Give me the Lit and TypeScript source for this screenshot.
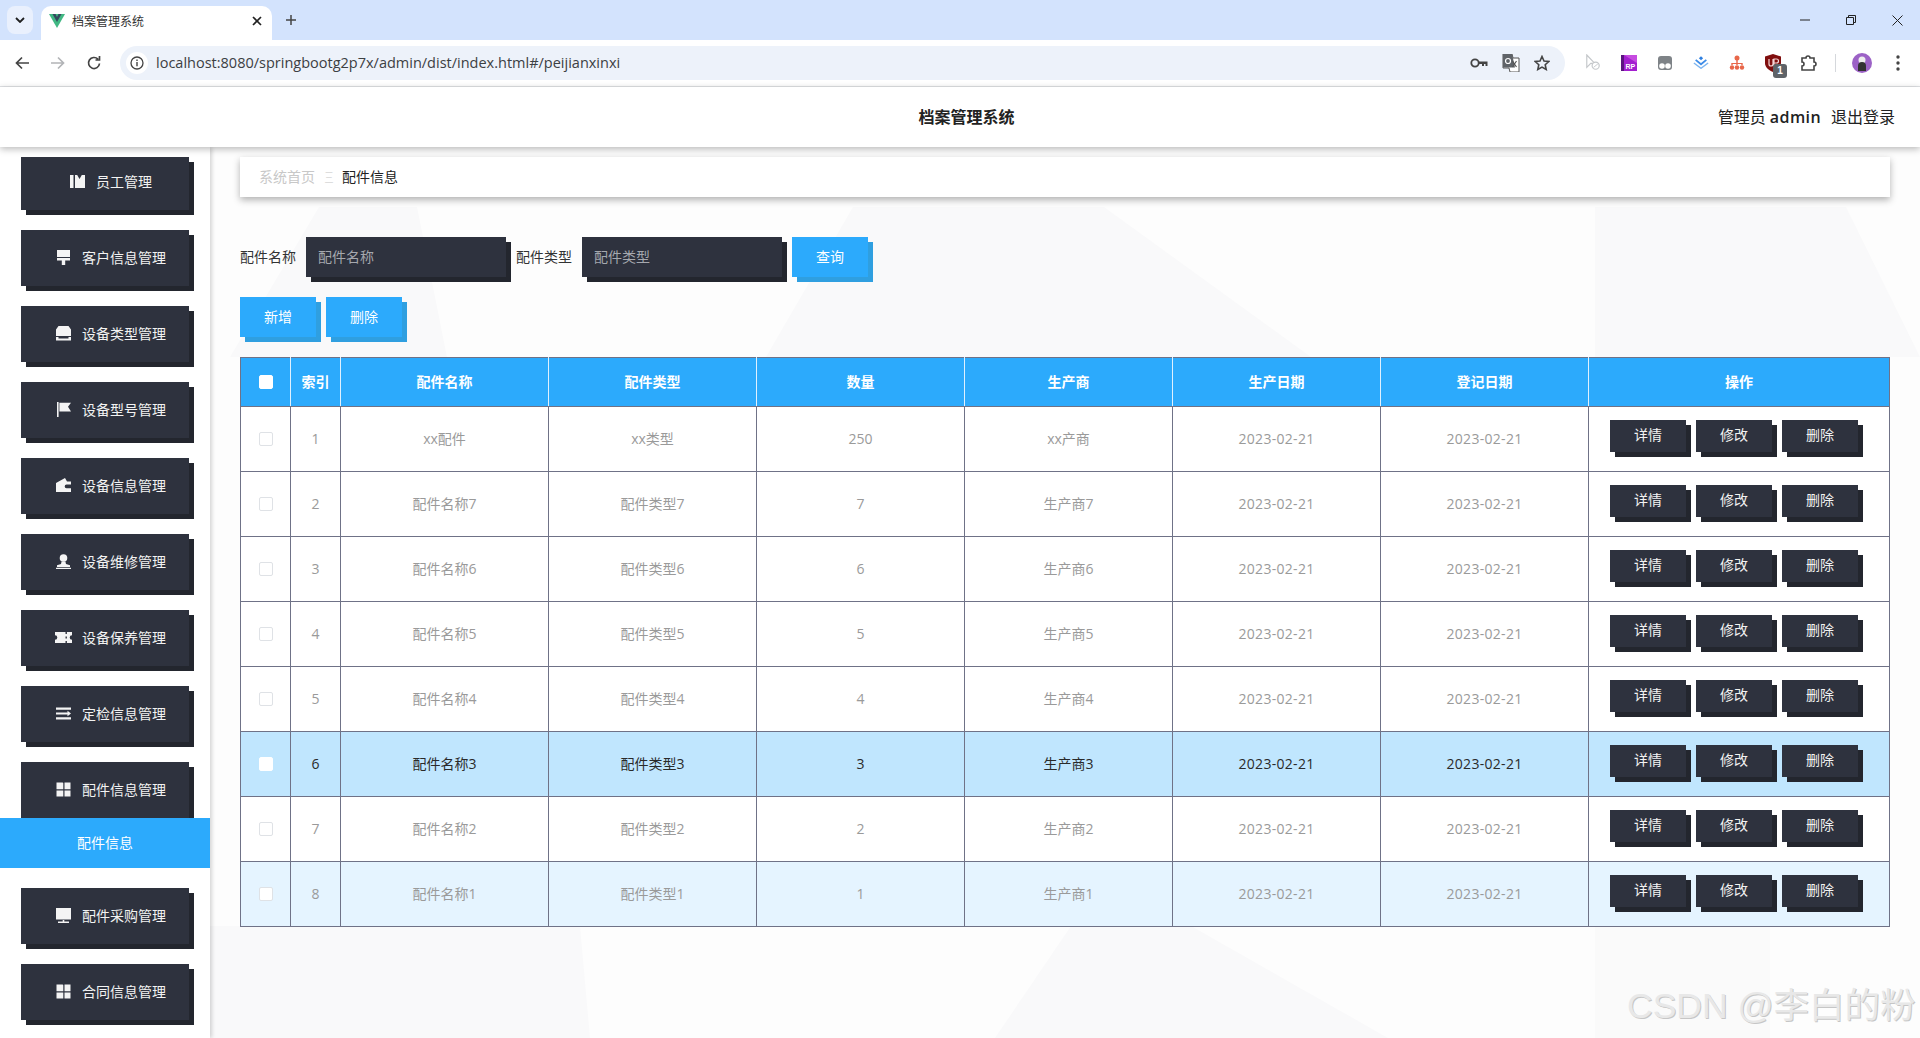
import { LitElement, html, css, svg } from "lit";
import { customElement } from "lit/decorators.js";

const ICONS: Record<string, any> = {
  map: svg`<path d="M0 1h3.500v13H0zM5 1h2.200l2.300 4 2.300-4H15v13H5z"/>`,
  brush: svg`<path d="M1 0h13v7H1zM1 8h13v2.400H9.200V15H5.800v-4.600H1z"/>`,
  box: svg`<path d="M2.500 0h10L15 3.500V10H0V3.500zM0 11h2.500v1.500h10V11H15v3.600H0z"/>`,
  flag: svg`<path d="M1 0h1.600v15H1zM3.400 .8H15l-3 4 3 4.600H3.400z"/>`,
  wallet: svg`<path d="M0 5l9-5 2 3.600h4v3H10.500a1.800 1.800 0 0 0 0 3.600H15V14H0z"/>`,
  user: svg`<circle cx="7.500" cy="4" r="3.800"/><path d="M5.600 7.600h3.800l.6 2.400 4 1.200V13H1v-1.800l4-1.200zM0 13.800h15V15H0z"/>`,
  ticket: svg`<path d="M-1 2h17v3.200a2.300 2.300 0 0 0 0 4.600V13H-1V9.800a2.300 2.300 0 0 0 0-4.600zM9.500 2v2h1.400V2zM9.500 6.500v2h1.400v-2zM9.500 11v2h1.400v-2z"/>`,
  list: svg`<path d="M0 1.500h15v2.200H0zM0 6.400h11.500V4.800L15 7.500l-3.500 2.700V8.600H0zM0 11.300h15v2.200H0z"/>`,
  grid: svg`<path d="M.5 .5h6a.8.8 0 0 1 .8 .8v5.900H.5zM8.500 .5h6v6.700H8.500zM.5 8.500h6.800v6H.5zM8.500 8.500h6v6h-6z"/>`,
  screen: svg`<path d="M0 0h15v11.500H0zM6.700 12h1.600v1.500H13V15H2v-1.500h4.700z"/>`,
};

const MENU = [
  ["员工管理", "map"], ["客户信息管理", "brush"], ["设备类型管理", "box"], ["设备型号管理", "flag"],
  ["设备信息管理", "wallet"], ["设备维修管理", "user"], ["设备保养管理", "ticket"], ["定检信息管理", "list"],
  ["配件信息管理", "grid"], ["配件采购管理", "screen"], ["合同信息管理", "grid"],
];

const ROWS = [
  ["1", "xx配件", "xx类型", "250", "xx产商"],
  ["2", "配件名称7", "配件类型7", "7", "生产商7"],
  ["3", "配件名称6", "配件类型6", "6", "生产商6"],
  ["4", "配件名称5", "配件类型5", "5", "生产商5"],
  ["5", "配件名称4", "配件类型4", "4", "生产商4"],
  ["6", "配件名称3", "配件类型3", "3", "生产商3"],
  ["7", "配件名称2", "配件类型2", "2", "生产商2"],
  ["8", "配件名称1", "配件类型1", "1", "生产商1"],
];

@customElement("app-root")
export class AppRoot extends LitElement {
  static styles = css`
    :host { display: flex; flex-direction: column; width: 1920px; height: 1038px; overflow: hidden; position: relative;
      font-family: "Open Sans", "Noto Sans CJK SC", sans-serif; font-size: 14px; background: #fff; color: #333; }
    * { box-sizing: border-box; }
    svg { display: block; flex: none; }
    .tabs { height: 40px; background: #d3e3fd; display: flex; align-items: flex-end; flex: none; position: relative; }
    .tabdown { width: 26px; height: 28px; margin: 0 0 6px 7px; border-radius: 8px; background: #e9f0fd; display: flex; align-items: center; justify-content: center; align-self: flex-end; }
    .tab { width: 231px; height: 34px; margin-left: 8px; background: #fff; border-radius: 10px 10px 0 0; display: flex; align-items: center; padding: 0 10px 4px 8px; font-size: 12px; color: #333; }
    .tab span { margin-left: 7px; flex: 1; padding-bottom: 1px; }
    .plus { margin: 0 0 7px 13px; width: 16px; height: 27px; display: flex; align-items: center; }
    .winbtns { margin-left: auto; display: flex; gap: 36px; align-self: center; margin-right: 17px; align-items: center; }
    .toolbar { height: 47px; flex: none; background: #fff; border-bottom: 1px solid #e1e3e6; display: flex; align-items: center; padding-bottom: 1px; }
    .nav { display: flex; gap: 20px; margin-left: 14px; }
    .addr { width: 1445px; height: 34px; margin-left: 18px; border-radius: 17px; background: #edf2fa; display: flex; align-items: center; padding: 0 15px 0 6px; }
    .info { width: 22px; height: 22px; border-radius: 50%; background: #fff; display: flex; align-items: center; justify-content: center; flex: none; }
    .url { margin-left: 8px; font-size: 14.500px; color: #3c4043; flex: 1; }
    .addricons { display: flex; gap: 14px; align-items: center; }
    .exts { display: flex; align-items: center; gap: 20px; margin-left: 20px; }
    .sep { width: 1px; height: 18px; background: #d5d8dc; margin: 0 -4px 0 -2px; }
    .ext-badge { position: relative; }
    .badge { position: absolute; right: -6px; bottom: -6px; width: 14px; height: 14px; border-radius: 3px; background: #5f6368; color: #fff; font: bold 10px/14px "Liberation Sans", sans-serif; text-align: center; }
    .appbar { height: 60px; flex: none; background: #fff; position: relative; z-index: 3; box-shadow: 0 2px 7px rgba(0,0,0,.28); display: grid; grid-template-columns: 1fr auto 1fr; align-items: center; padding: 0 25px 0 0; font-size: 16px; color: #222; }
    .apptitle { grid-column: 2; font-weight: 600; margin-left: 38px; padding-bottom: 2px; }
    .user { grid-column: 3; justify-self: end; display: flex; gap: 10px; padding-bottom: 2px; }
    .user b { font-weight: 600; letter-spacing: .4px; }
    .body { flex: 1; display: flex; min-height: 0; }
    .side { width: 210px; flex: none; background: #fff; box-shadow: 2px 0 4px rgba(0,0,0,.16); position: relative; z-index: 2; padding-top: 10px; overflow: hidden; display: flex; flex-direction: column; }
    .mi { width: 168px; height: 56px; margin: 0 0 20px 21px; flex: none; background: #2e323e; box-shadow: 5px 5px 0 #23262e; color: #f2f2f2; display: flex; align-items: center; justify-content: center; padding: 0 0 2px 12px; gap: 11px; }
    .mi.first { height: 53px; padding-bottom: 5px; }
    .mi.open { margin-bottom: 0; }
    .mi svg { fill: #f4f4f4; overflow: visible; }
    .sub { height: 50px; flex: none; background: #2caafc; color: #fff; display: flex; align-items: center; justify-content: center; margin-bottom: 20px; position: relative; padding-bottom: 2px; }
    .main { flex: 1; min-width: 0; position: relative; background: #fdfdfd; padding: 10px 30px 0; }
    .bg { position: absolute; left: 0; top: 0; }
    .content { position: relative; }
    .crumb { height: 40px; background: #fff; box-shadow: 0 3px 7px rgba(0,0,0,.3); display: flex; align-items: center; padding: 0 0 2px 19px; gap: 9px; color: #c8c8c8; }
    .crumb .cur { color: #222; }
    .crumb .div { width: 9px; display: flex; justify-content: center; color: #ddd; }
    .crumb .div span { transform: scaleX(.64); }
    .search { display: flex; align-items: center; margin-top: 40px; height: 40px; }
    .search label { color: #333; margin-right: 10px; padding-bottom: 2px; }
    .inp { width: 200px; height: 40px; background: #2e323e; box-shadow: 5px 5px 0 #23262e; color: #a5a8ae; padding: 0 0 2px 12px; display: flex; align-items: center; margin-right: 10px; }
    .btn { width: 76px; height: 40px; background: #2caafc; box-shadow: 5px 5px 0 #2f9fe0; color: #fff; display: flex; align-items: center; justify-content: center; padding-bottom: 2px; }
    .actions { display: flex; gap: 10px; margin-top: 20px; }
    table { border-collapse: collapse; table-layout: fixed; width: 1649px; margin-top: 20px; }
    th, td { border: 1px solid #6f7287; text-align: center; padding: 0 0 2px; font-weight: 400; }
    th:first-child, td:first-child { padding: 0; }
    th { height: 49px; background: #2caafc; color: #fff; font-weight: 700; border-left-color: #dff1ff; border-right-color: #dff1ff; }
    th:first-child { border-left-color: #6f7287; }
    th:last-child { border-right-color: #6f7287; }
    td { height: 65px; background: #fff; color: #9a9a9a; }
    tr.sel td { background: #c0e6fe; color: #2a2a2a; }
    tr.alt td { background: #e5f4ff; }
    .date { letter-spacing: .3px; }
    .cb { display: block; width: 14px; height: 14px; margin: 0 auto; border: 1px solid #dfe2e6; border-radius: 2px; background: #fff; }
    th .cb, tr.sel .cb { border-color: #fff; }
    td.ops { vertical-align: top; padding: 13px 0 0 21px; }
    .opsrow { display: flex; gap: 10px; }
    .op { width: 76px; height: 32px; background: #2e323e; box-shadow: 5px 5px 0 #23262e; color: #f2f2f2; display: flex; align-items: center; justify-content: center; padding-bottom: 5px; }
    .wm { position: absolute; left: 1627px; top: 977px; z-index: 5; font: 35.500px "Liberation Sans", "Noto Sans CJK SC", sans-serif; color: #e8e8e8; text-shadow: 1px 1px 0 #c6c6c6; white-space: nowrap; }
  `;

  private ico(n: string) {
    return html`<svg width="15" height="15" viewBox="0 0 15 15">${ICONS[n]}</svg>`;
  }

  private chrome() {
    return html`
      <div class="tabs">
        <div class="tabdown"><svg width="10" height="6" viewBox="0 0 10 6"><path d="M1 1l4 4 4-4" fill="none" stroke="#1f1f1f" stroke-width="1.800"/></svg></div>
        <div class="tab">
          <svg width="16" height="16" viewBox="0 0 16 16"><path d="M0 1h16L8 15z" fill="#41b883"/><path d="M3.500 1h3L8 4l1.500-3h3L8 9z" fill="#35495e"/></svg>
          <span>档案管理系统</span>
          <svg width="10" height="10" viewBox="0 0 10 10"><path d="M1 1l8 8M9 1l-8 8" stroke="#222" stroke-width="1.700"/></svg>
        </div>
        <div class="plus"><svg width="12" height="12" viewBox="0 0 12 12"><path d="M6 1v10M1 6h10" stroke="#444" stroke-width="1.500"/></svg></div>
        <div class="winbtns">
          <svg width="10" height="2" viewBox="0 0 10 2"><path d="M0 1h10" stroke="#222"/></svg>
          <svg width="10" height="10" viewBox="0 0 10 10"><path d="M.5 2.500h7v7h-7zM2.500 2.500v-2h7v7h-2" fill="none" stroke="#222"/></svg>
          <svg width="11" height="11" viewBox="0 0 11 11"><path d="M.5 .5l10 10M10.500 .5l-10 10" stroke="#222"/></svg>
        </div>
      </div>
      <div class="toolbar">
        <div class="nav">
          <svg width="16" height="16" viewBox="0 0 16 16"><path d="M15 8H2.500M8 2.500L2.500 8 8 13.500" fill="none" stroke="#444" stroke-width="1.700"/></svg>
          <svg width="16" height="16" viewBox="0 0 16 16"><path d="M1 8h12.500M8 2.500L13.500 8 8 13.500" fill="none" stroke="#b2b4b7" stroke-width="1.700"/></svg>
          <svg width="16" height="16" viewBox="0 0 16 16"><path d="M13.500 8.500A5.500 5.500 0 1 1 12 4.200M13.500 1v4h-4" fill="none" stroke="#444" stroke-width="1.700"/></svg>
        </div>
        <div class="addr">
          <div class="info"><svg width="14" height="14" viewBox="0 0 14 14"><circle cx="7" cy="7" r="6" fill="none" stroke="#444" stroke-width="1.300"/><path d="M7 6v4.200M7 3.500v1.400" stroke="#444" stroke-width="1.400"/></svg></div>
          <div class="url">localhost:8080/springbootg2p7x/admin/dist/index.html#/peijianxinxi</div>
          <div class="addricons">
            <svg width="18" height="12" viewBox="0 0 18 12"><circle cx="5" cy="6" r="3.700" fill="none" stroke="#444" stroke-width="1.800"/><path d="M8.500 4.500H17.500V9h-2V7h-1.500v2h-2V7H8.500z" fill="#444"/></svg>
            <svg width="18" height="18" viewBox="0 0 18 18"><path d="M1 0h9l1 4h6v14H8l-1-4H1z" fill="#fff" stroke="#555"/><path d="M1 0h9l3 13.500H1z" fill="#5f6368"/><path d="M10.500 7l4 6M14.500 7l-4 6" stroke="#555" stroke-width="1.200"/><circle cx="6" cy="7" r="2.500" fill="none" stroke="#fff" stroke-width="1.200"/></svg>
            <svg width="16" height="16" viewBox="0 0 16 16"><path d="M8 1.500l2 4.500 4.800.5-3.600 3.200 1 4.800L8 12.100l-4.200 2.400 1-4.800L1.200 6.500 6 6z" fill="none" stroke="#444" stroke-width="1.600"/></svg>
          </div>
        </div>
        <div class="exts">
          <svg width="16" height="18" viewBox="0 0 18 20"><path d="M2 1l9 9.500H6.500L2 15z" fill="#fff" stroke="#c4c7ca" stroke-width="1.300"/><circle cx="12" cy="13" r="4" fill="#fff" stroke="#c4c7ca" stroke-width="1.300"/><path d="M9.500 15l5-4" stroke="#c4c7ca"/></svg>
          <svg width="16" height="16" viewBox="0 0 16 16"><rect width="16" height="16" fill="#a31fd0"/><rect width="3" height="16" fill="#5b1480"/><path d="M3 0h13v8z" fill="#c64be0"/><text x="4.500" y="14" font-size="7" font-weight="700" font-family="Liberation Sans" fill="#fff">RP</text></svg>
          <svg width="16" height="16" viewBox="0 0 16 16"><rect x="1" y="1" width="14" height="14" rx="3" fill="#7e8387"/><circle cx="5" cy="11" r="2.800" fill="#fff"/><circle cx="11" cy="11" r="2.800" fill="#fff"/></svg>
          <svg width="16" height="13" viewBox="0 0 18 14"><path d="M9 0l2.400 2.200L9 4.400 6.600 2.200z" fill="#2d7fe0"/><path d="M3 4l6 5 6-5" fill="none" stroke="#3d8ce8" stroke-width="2"/><path d="M1 7.500l8 6 8-6" fill="none" stroke="#7db5f0" stroke-width="1.600"/></svg>
          <svg width="16" height="16" viewBox="0 0 16 16" fill="#e8674a"><circle cx="8" cy="3" r="2.500"/><path d="M7.300 5h1.400v3h5v2h-1.400V9H8.700v1H7.300V9H3.700v1H2.300V8h5z"/><circle cx="3" cy="12.500" r="2.200"/><circle cx="8" cy="12.500" r="2.200"/><circle cx="13" cy="12.500" r="2.200"/></svg>
          <div class="ext-badge"><svg width="16" height="18" viewBox="0 0 16 18"><path d="M8 0l8 2.500V9c0 4-3 7-8 9-5-2-8-5-8-9V2.500z" fill="#800e0e"/><path d="M4 5v5a2 2 0 0 0 4 0V5M9 12V5h2.500a2 2 0 0 1 0 4H9" fill="none" stroke="#f3d6d6" stroke-width="1.200"/></svg><div class="badge">1</div></div>
          <svg width="16" height="18" viewBox="0 0 16 18"><path d="M1 4h4a2 2 0 1 1 4 0h4v4a2 2 0 1 1 0 4v4H1v-4a2 2 0 1 0 0-4z" fill="#fff" stroke="#444" stroke-width="1.600"/></svg>
          <div class="sep"></div>
          <svg width="20" height="20" viewBox="0 0 20 20"><circle cx="10" cy="10" r="10" fill="#9c62c6"/><circle cx="10" cy="7" r="3.500" fill="#eee"/><path d="M6 18v-5a4 4 0 0 1 8 0v5z" fill="#333"/></svg>
          <svg width="4" height="16" viewBox="0 0 4 16" style="margin-left:4px" fill="#444"><circle cx="2" cy="2" r="1.700"/><circle cx="2" cy="8" r="1.700"/><circle cx="2" cy="14" r="1.700"/></svg>
        </div>
      </div>`;
  }

  private side() {
    return html`<aside class="side">
      ${MENU.map(([t, i], n) => html`
        <div class="mi ${n === 0 ? "first" : ""} ${n === 8 ? "open" : ""}">${this.ico(i)}<span>${t}</span></div>
        ${n === 8 ? html`<div class="sub">配件信息</div>` : ""}
      `)}
    </aside>`;
  }

  private table() {
    const heads = ["配件名称", "配件类型", "数量", "生产商", "生产日期", "登记日期"];
    return html`<table>
      <colgroup><col style="width:50px"><col style="width:50px">${[0, 1, 2, 3, 4, 5].map(() => html`<col style="width:208px">`)}<col style="width:301px"></colgroup>
      <thead><tr><th><span class="cb"></span></th><th>索引</th>${heads.map((h) => html`<th>${h}</th>`)}<th>操作</th></tr></thead>
      <tbody>
        ${ROWS.map((r, i) => html`<tr class="${i === 5 ? "sel" : i === 7 ? "alt" : ""}">
          <td><span class="cb"></span></td>
          ${r.map((c) => html`<td>${c}</td>`)}
          <td class="date">2023-02-21</td><td class="date">2023-02-21</td>
          <td class="ops"><div class="opsrow"><div class="op">详情</div><div class="op">修改</div><div class="op">删除</div></div></td>
        </tr>`)}
      </tbody>
    </table>`;
  }

  render() {
    return html`
      ${this.chrome()}
      <header class="appbar">
        <div class="apptitle">档案管理系统</div>
        <div class="user"><span>管理员 <b>admin</b></span><span>退出登录</span></div>
      </header>
      <div class="body">
        ${this.side()}
        <main class="main">
          <svg class="bg" width="1710" height="891" viewBox="0 0 1710 891" fill="#f9f9fa">
            <path d="M109 60h98l30 150H20z"/>
            <path d="M643 60h251l207 150H556z"/>
            <path d="M1385 60h251l74 150H1385z"/>
            <path d="M0 779h370l10 112H0z"/>
            <path d="M861 779h120l197 112H785z"/>
            <path d="M1385 779h175v112h-175z" fill="#fafafa"/>
          </svg>
          <div class="content">
            <div class="crumb"><span>系统首页</span><span class="div"><span>三</span></span><span class="cur">配件信息</span></div>
            <div class="search">
              <label>配件名称</label><div class="inp">配件名称</div>
              <label>配件类型</label><div class="inp">配件类型</div>
              <div class="btn">查询</div>
            </div>
            <div class="actions"><div class="btn">新增</div><div class="btn">删除</div></div>
            ${this.table()}
          </div>
        </main>
      </div>
      <div class="wm">CSDN @李白的粉</div>
    `;
  }
}
